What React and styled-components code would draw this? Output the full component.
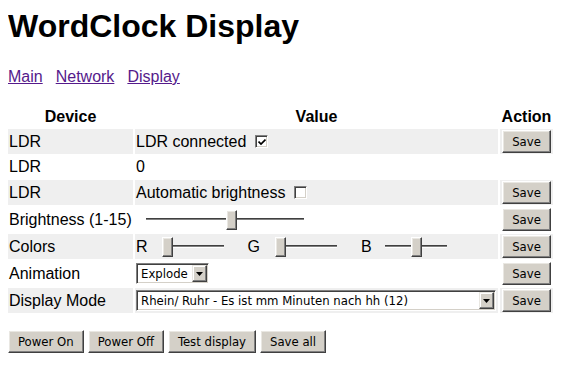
import React from 'react';
import styled, { createGlobalStyle } from 'styled-components';

const GlobalStyle = createGlobalStyle`
  body {
    margin: 8px;
    background: #fff;
    color: #000;
    font-family: "Liberation Sans", Arial, sans-serif;
    font-size: 16px;
  }
`;

const uiFont = `"DejaVu Sans Condensed", "DejaVu Sans", Tahoma, sans-serif`;

const Title = styled.h1`
  margin: 0 0 23px;
  font-size: 32px;
  font-weight: bold;
`;

const Nav = styled.p`
  display: flex;
  gap: 13px;
  margin: 0 0 18px;
`;

const NavLink = styled.a`
  color: #551a8b;
  text-decoration: underline;
`;

const Table = styled.table`
  border-spacing: 2px;
  margin-left: -2px;
  table-layout: fixed;
  width: 549px;
`;

const HeadCell = styled.th`
  box-sizing: border-box;
  width: ${(p) => p.$w}px;
  height: 21px;
  padding: 2px 1px 0;
  font-weight: bold;
  text-align: center;
  vertical-align: top;
`;

const Row = styled.tr`
  height: ${(p) => p.$h}px;
  background: ${(p) => (p.$shaded ? '#efefef' : 'transparent')};
`;

const Cell = styled.td`
  box-sizing: border-box;
  padding: 0 1px;
  vertical-align: middle;
  white-space: nowrap;
`;

const ActionCell = styled.td`
  box-sizing: border-box;
  padding: 0;
  text-align: center;
  vertical-align: middle;
`;

const ValueLine = styled.div`
  display: flex;
  align-items: center;
  height: 18px;
`;

const Button = styled.button`
  box-sizing: border-box;
  height: 23px;
  padding: 0 9px;
  font-family: ${uiFont};
  font-size: 13px;
  color: #000;
  background: #d4d0c8;
  border: 1px solid;
  border-color: #fff #404040 #404040 #fff;
  box-shadow: inset -1px -1px #808080, inset 1px 1px #e9e7e2;
  vertical-align: middle;
  cursor: pointer;
`;

const CheckBox = styled.span`
  display: inline-flex;
  align-items: center;
  justify-content: center;
  box-sizing: border-box;
  width: 13px;
  height: 13px;
  margin-left: 9px;
  background: #fff;
  border: 1px solid;
  border-color: #808080 #fff #fff #808080;
  box-shadow: inset 1px 1px #404040, inset -1px -1px #d4d0c8;
  flex-shrink: 0;
`;

const Slider = styled.span`
  position: relative;
  display: block;
  flex-shrink: 0;
  width: ${(p) => p.$w}px;
  height: 20px;
  margin-left: ${(p) => p.$ml || 0}px;
  margin-right: ${(p) => p.$mr || 0}px;
  &::before {
    content: '';
    position: absolute;
    left: 0;
    right: 0;
    top: 8px;
    height: 1px;
    background: #808080;
    border-top: 1px solid #404040;
    border-bottom: 1px solid #fff;
  }
`;

const Thumb = styled.span`
  position: absolute;
  top: 0;
  box-sizing: border-box;
  width: 11px;
  height: 20px;
  background: #d4d0c8;
  border: 1px solid;
  border-color: #fff #404040 #404040 #fff;
  box-shadow: inset -1px -1px #808080, inset 1px 1px #e9e7e2;
`;

const ColorLabel = styled.span`
  flex-shrink: 0;
`;

const Select = styled.div`
  display: flex;
  align-items: center;
  box-sizing: border-box;
  width: ${(p) => p.$w}px;
  height: 21px;
  padding: 1px;
  background: #fff;
  border: 1px solid;
  border-color: #808080 #fff #fff #808080;
  box-shadow: inset 1px 1px #404040, inset -1px -1px #d4d0c8;
  font-family: ${uiFont};
  font-size: 13px;
  flex-shrink: 0;
`;

const SelectText = styled.span`
  flex: 1;
  padding-left: 3px;
  white-space: nowrap;
  overflow: hidden;
`;

const SelectArrow = styled.span`
  display: flex;
  align-items: center;
  justify-content: center;
  box-sizing: border-box;
  width: 15px;
  height: 17px;
  background: #d4d0c8;
  border: 1px solid;
  border-color: #e9e7e2 #404040 #404040 #e9e7e2;
  box-shadow: inset -1px -1px #808080, inset 1px 1px #fff;
`;

const Footer = styled.div`
  display: flex;
  gap: 4px;
  margin-top: 15px;
`;

const Check = () => (
  <svg width="8" height="8" viewBox="0 0 8 8">
    <path d="M0.5 3.5 L3 6 L7.5 1.5" fill="none" stroke="#000" strokeWidth="1.7" />
  </svg>
);

const Arrow = () => (
  <svg width="7" height="4" viewBox="0 0 7 4">
    <path d="M0 0 H7 L3.5 4 Z" fill="#000" />
  </svg>
);

const Range = ({ w, value, ml, mr }) => (
  <Slider $w={w} $ml={ml} $mr={mr}>
    <Thumb style={{ left: Math.round(value * (w - 11)) }} />
  </Slider>
);

const Dropdown = ({ w, text }) => (
  <Select $w={w}>
    <SelectText>{text}</SelectText>
    <SelectArrow>
      <Arrow />
    </SelectArrow>
  </Select>
);

const rows = [
  {
    device: 'LDR',
    shaded: true,
    save: true,
    value: (
      <>
        LDR connected
        <CheckBox>
          <Check />
        </CheckBox>
      </>
    ),
  },
  { device: 'LDR', h: 22, value: '0' },
  {
    device: 'LDR',
    shaded: true,
    save: true,
    value: (
      <>
        Automatic brightness
        <CheckBox />
      </>
    ),
  },
  {
    device: 'Brightness (1-15)',
    save: true,
    value: <Range w={158} value={0.545} ml={10} />,
  },
  {
    device: 'Colors',
    shaded: true,
    save: true,
    value: (
      <>
        <ColorLabel>R</ColorLabel>
        <Range w={62} value={0} ml={14} mr={24} />
        <ColorLabel>G</ColorLabel>
        <Range w={62} value={0} ml={15} mr={24} />
        <ColorLabel>B</ColorLabel>
        <Range w={62} value={0.51} ml={13} />
      </>
    ),
  },
  {
    device: 'Animation',
    save: true,
    value: <Dropdown w={73} text="Explode" />,
  },
  {
    device: 'Display Mode',
    shaded: true,
    save: true,
    value: <Dropdown w={360} text="Rhein/ Ruhr - Es ist mm Minuten nach hh (12)" />,
  },
];

export default function App() {
  return (
    <>
      <GlobalStyle />
      <Title>WordClock Display</Title>
      <Nav>
        <NavLink href="#main">Main</NavLink>
        <NavLink href="#network">Network</NavLink>
        <NavLink href="#display">Display</NavLink>
      </Nav>
      <Table>
        <thead>
          <tr>
            <HeadCell $w={125}>Device</HeadCell>
            <HeadCell $w={363}>Value</HeadCell>
            <HeadCell $w={53}>Action</HeadCell>
          </tr>
        </thead>
        <tbody>
          {rows.map((row, i) => (
            <Row key={i} $h={row.h || 25} $shaded={row.shaded}>
              <Cell>{row.device}</Cell>
              <Cell>
                <ValueLine>{row.value}</ValueLine>
              </Cell>
              <ActionCell>{row.save && <Button>Save</Button>}</ActionCell>
            </Row>
          ))}
        </tbody>
      </Table>
      <Footer>
        <Button>Power On</Button>
        <Button>Power Off</Button>
        <Button>Test display</Button>
        <Button>Save all</Button>
      </Footer>
    </>
  );
}
